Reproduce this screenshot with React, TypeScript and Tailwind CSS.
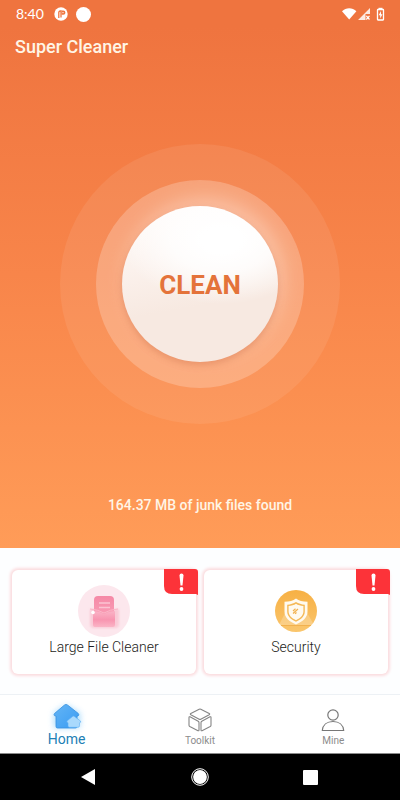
import type { ReactNode } from "react";

function StatusBar() {
  return (
    <div className="flex h-7 items-center justify-between pr-[15px] pl-4 text-white">
      <div className="flex items-center gap-2">
        <time className="mr-0.5 font-[Lato,sans-serif] text-sm leading-5">8:40</time>
        <svg viewBox="0 0 14 14" className="size-3.5" aria-hidden="true">
          <circle cx="7" cy="7" r="6.7" fill="#fff" />
          <path d="M4.800 11V5.500Q4.800 4 6.300 4H7v6.500" fill="none" stroke="#f0763f" strokeWidth="1.300" />
          <path d="M7.500 3.500h1.800a2 2 0 0 1 0 4.300H7.500z" fill="#f0763f" />
          <circle cx="9" cy="5.600" r=".7" fill="#fff" />
        </svg>
        <span className="size-[15px] rounded-full bg-white" />
      </div>
      <svg viewBox="0 0 44 14" className="h-3.5 w-11" fill="#fff" aria-hidden="true">
        <path d="M8.200 12.500 1 4.200C5 .1 11.400.1 15.400 4.200z" />
        <path d="M17 13 29 1v6h-4.500v6z" opacity=".85" />
        <path d="m25.300 8.800 3.200 3.700m0-3.700-3.200 3.700" stroke="#fff" strokeWidth="1.200" />
        <path d="M37.500.8h4v1.700h-4z" />
        <rect x="36.500" y="2.500" width="6" height="10.500" rx=".5" fill="none" stroke="#fff" strokeWidth="1.300" />
        <path d="M40 4 37.700 8.300h1.500V11.500l2.300-4.300H40z" />
      </svg>
    </div>
  );
}

function CleanDial() {
  return (
    <div className="flex size-[280px] items-center justify-center rounded-full bg-white/8">
      <div className="flex size-[208px] items-center justify-center rounded-full bg-white/22">
        <button
          type="button"
          className="size-[156px] rounded-full bg-[#f7e9e1] bg-[radial-gradient(ellipse_100px_64px_at_64%_22%,#ffffff_20%,#ffffffcc_50%,#ffffff00_100%),linear-gradient(170deg,#fffaf8_8%,#f7e9e1_62%)] pt-0.5 font-[Roboto,sans-serif] text-[26px] leading-8 font-bold text-[#e4733a] shadow-[0_3px_7px_#c5582e55,5px_-7px_20px_#ffe9dc77]"
        >
          CLEAN
        </button>
      </div>
    </div>
  );
}

function FileIcon() {
  return (
    <svg viewBox="0 0 52 52" className="size-[52px]" aria-hidden="true">
      <defs>
        <linearGradient id="sheet" x1="0" y1="0" x2="0" y2="1">
          <stop offset="0" stopColor="#f589a6" />
          <stop offset="1" stopColor="#fba6bd" />
        </linearGradient>
        <linearGradient id="pocket" x1="0" y1="0" x2="0" y2="1">
          <stop offset="0" stopColor="#fab4c7" />
          <stop offset=".55" stopColor="#f895b0" />
          <stop offset="1" stopColor="#fbb4c6" />
        </linearGradient>
        <filter id="soft"><feGaussianBlur stdDeviation="1" /></filter>
      </defs>
      <circle cx="26" cy="26" r="26" fill="#fce7ed" />
      <path d="M12 24h29v15q0 4-4 4H16q-4 0-4-4z" fill="#f9c0cf" opacity=".7" filter="url(#soft)" />
      <rect x="16" y="11" width="20" height="29" rx="4" fill="url(#sheet)" />
      <path d="M21 18h11M21 22.500h11" stroke="#fbc4d2" strokeWidth="1.400" />
      <path d="M15 26q6 0 11 3 5-3 11-3v14q0 2-2 2H17q-2 0-2-2z" fill="url(#pocket)" />
      <path d="M12 24q8 .5 14 4 6-3.500 14-4" fill="none" stroke="#fbb7c8" strokeWidth="1" />
      <circle cx="15" cy="27.500" r="1.800" fill="#fff" />
    </svg>
  );
}

function ShieldIcon() {
  return (
    <svg viewBox="0 0 42 42" className="size-[42px]" aria-hidden="true">
      <defs>
        <linearGradient id="gold" x1="0" y1="0" x2="0" y2="1">
          <stop offset="0" stopColor="#f7b044" />
          <stop offset="1" stopColor="#fac66d" />
        </linearGradient>
      </defs>
      <circle cx="21" cy="21" r="21" fill="url(#gold)" />
      <path d="m4 35 8-16h18l9 16z" fill="#fff" opacity=".22" />
      <path d="M6 35.500h30" stroke="#f2b14f" strokeWidth="1" />
      <path
        d="M21 8.500c3 2.400 6.500 3.300 11.500 3.300v9.700c0 6-4.700 10-11.500 13-6.800-3-11.500-7-11.500-13v-9.700c5 0 8.500-.9 11.500-3.300z"
        fill="#fffaf0"
      />
      <path
        d="M21 12c2.500 1.600 5.500 2.500 8.800 2.700v6.800c0 4.500-3.500 7.900-8.800 10.300-5.300-2.400-8.800-5.800-8.800-10.300v-6.800c3.300-.2 6.300-1.100 8.800-2.700z"
        fill="#f5b957"
      />
      <path d="M21 13.800c2 1.300 4.600 2.100 7.400 2.300v5.400c0 3.700-2.900 6.500-7.400 8.700-4.500-2.200-7.400-5-7.400-8.700v-5.400c2.800-.2 5.400-1 7.400-2.300z" fill="#fffaf0" />
      <path d="m18 23.500 5-4.500M18 21l2.500-2.200M20 23.800l1.500-1.300" stroke="#f2b14f" strokeWidth="1.200" />
    </svg>
  );
}

function ToolCard({ label, children }: { label: string; children: ReactNode }) {
  return (
    <button
      type="button"
      className="relative flex h-[104px] min-w-0 flex-1 flex-col items-center rounded-md bg-white pt-[15px] shadow-[0_0_3px_2px_#fbdcdf]"
    >
      <span className="flex h-[52px] items-center">{children}</span>
      <span className="font-[Roboto,sans-serif] text-sm leading-5 font-light text-[#1c1c20]">{label}</span>
      <span className="absolute -top-px -right-0.5" aria-hidden="true">
        <svg viewBox="0 0 34 26" className="h-[26px] w-[34px]">
          <path d="M0 0h31q3 0 3 3v23l-2-1H8q-8 0-8-8z" fill="#fc3339" />
          <path d="M15.500 6.500q0-2 2-2t2 2l-1 10h-2z" fill="#fff" />
          <circle cx="17.500" cy="20" r="1.900" fill="#fff" />
        </svg>
      </span>
    </button>
  );
}

function HomeIcon() {
  return (
    <svg viewBox="0 0 36 32" className="h-8 w-9 overflow-visible" aria-hidden="true">
      <defs>
        <linearGradient id="house" x1="0" y1="0" x2="1" y2="1">
          <stop offset="0" stopColor="#64b5f5" />
          <stop offset="1" stopColor="#3a9cf3" />
        </linearGradient>
        <filter id="halo" x="-40%" y="-40%" width="180%" height="180%">
          <feGaussianBlur stdDeviation="3" />
        </filter>
      </defs>
      <path d="M5 14 17 6l14 8v15H5z" fill="#8fd0fb" opacity=".75" filter="url(#halo)" />
      <path
        d="M15.500 6q1.500-1.200 3 0l10.800 8.500q1.200 1.500-.3 2.500H28v10.500q0 1.500-1.500 1.500h-18Q7 29 7 27.500V17q-3-.2-1.500-2.500z"
        fill="url(#house)"
        stroke="#3991df"
        strokeWidth=".8"
      />
      <path
        d="M23.500 17.500q1-.8 2 0l6 4.500q.8 1.500-1 1.800v3q0 1.500-1.500 1.500h-8.500q-1.500 0-1.500-1.500v-3q-1.800-.3-1-1.800z"
        fill="#a9d9fc"
        stroke="#5fb0f5"
        strokeWidth=".6"
      />
    </svg>
  );
}

function CubeIcon() {
  return (
    <svg viewBox="0 0 24 24" className="size-6" fill="none" stroke="#858585" strokeWidth="1.100" strokeLinejoin="round" aria-hidden="true">
      <path d="M11.200 1.200q.8-.4 1.600 0l8.400 4.300q1 .6 0 1.200l-8.400 4.500q-.8.400-1.600 0L2.800 6.700q-1-.6 0-1.200z" />
      <path d="M2 8.800q-1-.4-1 .6v7.800q0 .8.800 1.300l8.200 4.200q1 .4 1-.6v-7.600q0-.8-.8-1.300z" />
      <path d="M22 8.800q1-.4 1 .6v7.800q0 .8-.8 1.300L14 22.700q-1 .4-1-.6v-7.600q0-.8.8-1.300z" />
    </svg>
  );
}

function PersonIcon() {
  return (
    <svg viewBox="0 0 24 24" className="size-6" fill="none" stroke="#777" strokeWidth="1.200" strokeLinejoin="round" aria-hidden="true">
      <circle cx="12" cy="7" r="5.200" />
      <path d="M1.300 22.500C1.800 17 6 13.500 12 13.500s10.200 3.500 10.700 9z" />
    </svg>
  );
}

function TabBar() {
  return (
    <nav className="grid h-[60px] grid-cols-3 border-t border-[#edf1f5] border-b border-b-[#8a8a8a] bg-white font-[Roboto,sans-serif]">
      <a href="#home" aria-current="page" className="flex flex-col items-center pt-1 text-sm leading-4 text-[#2180b5]">
        <HomeIcon />
        Home
      </a>
      <a href="#toolkit" className="flex flex-col items-center gap-[3px] pt-[13px] text-[10px] leading-3 text-[#8c8c8c]">
        <CubeIcon />
        Toolkit
      </a>
      <a href="#mine" className="flex flex-col items-center gap-[3px] pt-[13px] text-[10px] leading-3 text-[#8c8c8c]">
        <PersonIcon />
        Mine
      </a>
    </nav>
  );
}

function SystemBar() {
  return (
    <div className="flex h-[46px] items-center justify-between bg-black pr-[82px] pl-20">
      <button type="button" aria-label="Back">
        <svg viewBox="0 0 16 18" className="h-[18px] w-4" fill="#fff">
          <path d="M15 1v16L1 9z" />
        </svg>
      </button>
      <button type="button" aria-label="Home">
        <svg viewBox="0 0 18 18" className="size-[18px]">
          <circle cx="9" cy="9" r="8.300" fill="none" stroke="#fff" strokeWidth="1" />
          <circle cx="9" cy="9" r="6.900" fill="#fff" />
        </svg>
      </button>
      <button type="button" aria-label="Recent apps" className="size-[15px] rounded-[1px] bg-white" />
    </div>
  );
}

export default function App() {
  return (
    <div className="flex min-h-screen flex-col bg-[#fdfeff]">
      <header className="flex flex-1 flex-col bg-linear-to-b from-[#ef743f] from-5% via-[#f8854a] via-50% to-[#ff9c58]">
        <StatusBar />
        <h1 className="px-[15px] pt-[7px] font-[Roboto,sans-serif] text-lg leading-6 font-medium text-[#fff5e6]">Super Cleaner</h1>
        <div className="flex flex-1 flex-col items-center justify-between pt-[85px] pb-[33px]">
          <CleanDial />
          <p className="font-[Roboto,sans-serif] text-sm leading-5 font-medium text-[#fff5e6]">164.37 MB of junk files found</p>
        </div>
      </header>
      <main className="flex gap-2 px-3 pt-[22px] pb-5">
        <ToolCard label="Large File Cleaner">
          <FileIcon />
        </ToolCard>
        <ToolCard label="Security">
          <ShieldIcon />
        </ToolCard>
      </main>
      <TabBar />
      <SystemBar />
    </div>
  );
}
